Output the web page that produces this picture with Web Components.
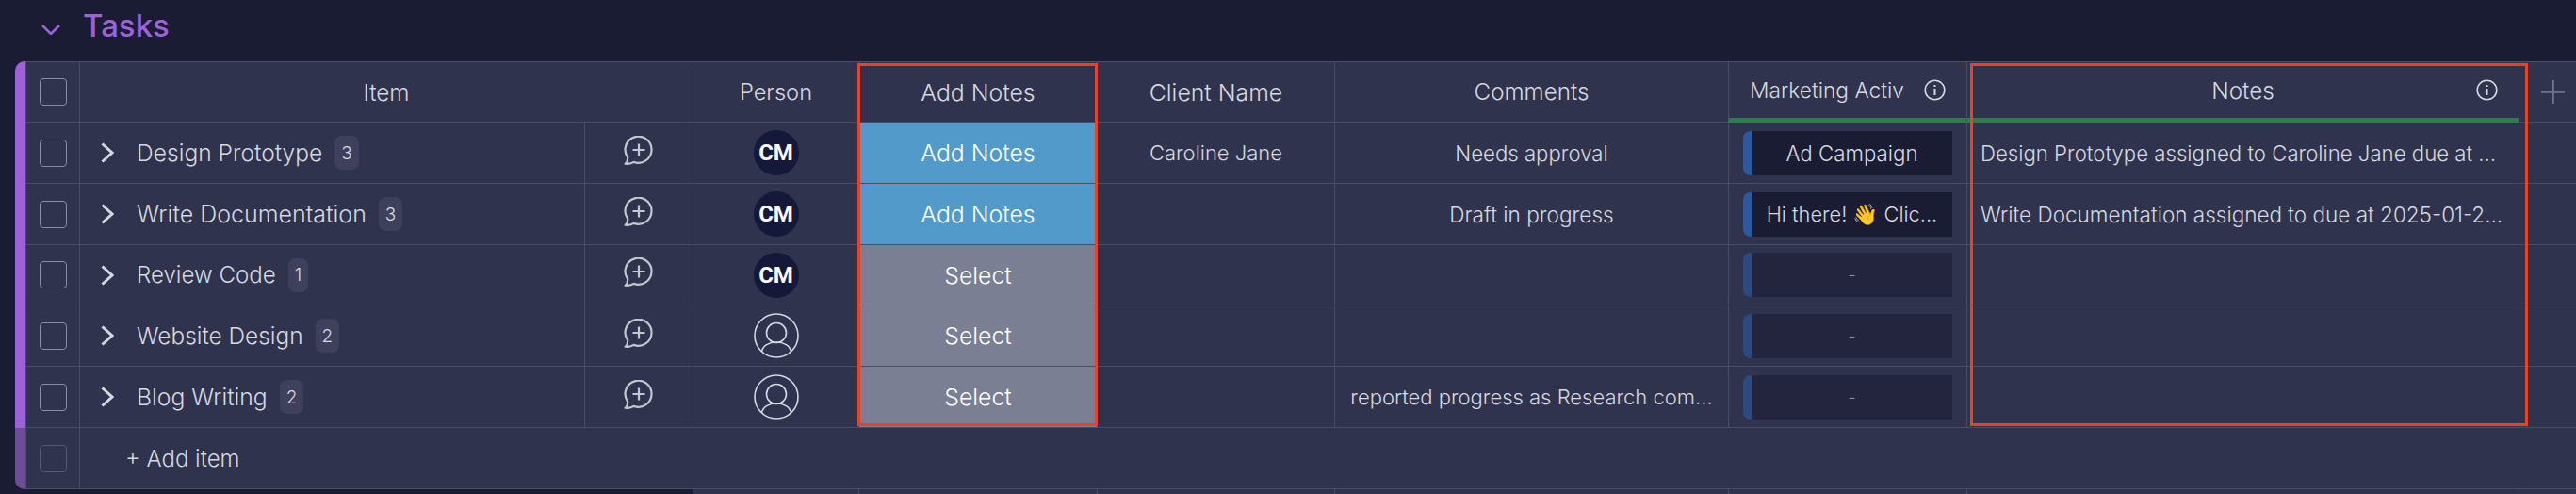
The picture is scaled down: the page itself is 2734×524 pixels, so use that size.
<!DOCTYPE html>
<html>
<head>
<meta charset="utf-8">
<title>Tasks</title>
<style>
html, body { margin: 0; background: #1a1c34; height: 524px; overflow: hidden; }
body { font-family: Inter, "Liberation Sans", sans-serif; color: #d5d8df; }
</style>
</head>
<body>
<task-board>
  <group-title slot="title">Tasks</group-title>

  <board-row>
    <board-cell kind="accent" class="top"></board-cell>
    <board-cell head><check-box></check-box></board-cell>
    <board-cell head style="grid-column: span 2; --fs: 24.300px">Item</board-cell>
    <board-cell head style="--fs: 23.700px">Person</board-cell>
    <board-cell head style="--fs: 24.800px">Add Notes</board-cell>
    <board-cell head style="--fs: 24.800px">Client Name</board-cell>
    <board-cell head style="--fs: 24.200px">Comments</board-cell>
    <board-cell head kind="green" style="--fs: 22.700px"><head-label>Marketing Activ</head-label></board-cell>
    <board-cell head kind="green" style="--fs: 24.300px"><head-label wide>Notes</head-label></board-cell>
    <board-cell head><add-column></add-column></board-cell>
  </board-row>

  <board-row>
    <board-cell kind="accent"></board-cell>
    <board-cell><check-box></check-box></board-cell>
    <board-cell kind="item" style="--item-fs: 24.600px"><item-name>Design Prototype<span slot="count">3</span></item-name></board-cell>
    <board-cell><update-icon></update-icon></board-cell>
    <board-cell><person-avatar>CM</person-avatar></board-cell>
    <board-cell kind="blue">Add Notes</board-cell>
    <board-cell>Caroline Jane</board-cell>
    <board-cell style="--fs: 22.200px">Needs approval</board-cell>
    <board-cell><status-tag>Ad Campaign</status-tag></board-cell>
    <board-cell kind="note" style="--fs: 22.200px">Design Prototype assigned to Caroline Jane due at ...</board-cell>
    <board-cell></board-cell>
  </board-row>

  <board-row>
    <board-cell kind="accent"></board-cell>
    <board-cell><check-box></check-box></board-cell>
    <board-cell kind="item" style="--item-fs: 25px"><item-name>Write Documentation<span slot="count">3</span></item-name></board-cell>
    <board-cell><update-icon></update-icon></board-cell>
    <board-cell><person-avatar>CM</person-avatar></board-cell>
    <board-cell kind="blue">Add Notes</board-cell>
    <board-cell></board-cell>
    <board-cell style="--fs: 22.600px">Draft in progress</board-cell>
    <board-cell><status-tag style="font-size: 21.800px">Hi there! 👋 Clic...</status-tag></board-cell>
    <board-cell kind="note" style="--fs: 22.500px">Write Documentation assigned to due at 2025-01-2...</board-cell>
    <board-cell></board-cell>
  </board-row>

  <board-row style="--row-h: 64px">
    <board-cell kind="accent"></board-cell>
    <board-cell class="open"><check-box></check-box></board-cell>
    <board-cell kind="item" class="open" style="--item-fs: 24.100px"><item-name>Review Code<span slot="count">1</span></item-name></board-cell>
    <board-cell class="open"><update-icon></update-icon></board-cell>
    <board-cell class="open"><person-avatar>CM</person-avatar></board-cell>
    <board-cell kind="gray">Select</board-cell>
    <board-cell></board-cell>
    <board-cell></board-cell>
    <board-cell><status-tag empty>-</status-tag></board-cell>
    <board-cell></board-cell>
    <board-cell></board-cell>
  </board-row>

  <board-row>
    <board-cell kind="accent"></board-cell>
    <board-cell><check-box></check-box></board-cell>
    <board-cell kind="item"><item-name>Website Design<span slot="count">2</span></item-name></board-cell>
    <board-cell><update-icon></update-icon></board-cell>
    <board-cell><person-avatar blank></person-avatar></board-cell>
    <board-cell kind="gray">Select</board-cell>
    <board-cell></board-cell>
    <board-cell></board-cell>
    <board-cell><status-tag empty>-</status-tag></board-cell>
    <board-cell></board-cell>
    <board-cell></board-cell>
  </board-row>

  <board-row>
    <board-cell kind="accent"></board-cell>
    <board-cell><check-box></check-box></board-cell>
    <board-cell kind="item" style="--item-fs: 24.700px"><item-name>Blog Writing<span slot="count">2</span></item-name></board-cell>
    <board-cell><update-icon></update-icon></board-cell>
    <board-cell><person-avatar blank></person-avatar></board-cell>
    <board-cell kind="gray">Select</board-cell>
    <board-cell></board-cell>
    <board-cell>reported progress as Research com...</board-cell>
    <board-cell><status-tag empty>-</status-tag></board-cell>
    <board-cell></board-cell>
    <board-cell></board-cell>
  </board-row>

  <board-row>
    <board-cell kind="accent" class="dim bottom"></board-cell>
    <board-cell><check-box dim></check-box></board-cell>
    <board-cell kind="add" style="grid-column: span 9">+ Add item</board-cell>
  </board-row>

  <board-row style="--row-h: 5px">
    <board-cell kind="gap" style="grid-column: span 4"></board-cell>
    <board-cell kind="sum"></board-cell>
    <board-cell kind="sum"></board-cell>
    <board-cell kind="sum"></board-cell>
    <board-cell kind="sum"></board-cell>
    <board-cell kind="sum"></board-cell>
    <board-cell kind="sum"></board-cell>
    <board-cell kind="sum"></board-cell>
  </board-row>

  <mark-box style="left: 910px; top: 67px; width: 255px; height: 385px" slot="marks"></mark-box>
  <mark-box style="left: 2091px; top: 67px; width: 592px; height: 385px" slot="marks"></mark-box>
</task-board>

<script>
function define(name, css, html) {
  customElements.define(name, class extends HTMLElement {
    constructor() {
      super();
      this.attachShadow({ mode: "open" }).innerHTML = `<style>${css}</style>${html}`;
    }
  });
}

define("task-board", `
:host {
  position: relative;
  display: block;
  --cols: 11px 57px 536px 115px 176px 253px 252px 418px 253px 586px 61px;
  --bg: #30334e;
  --line: #4b4d68;
}
.rows { display: block; padding-left: 16px; }
`, `<slot name="title"></slot><div class="rows"><slot></slot></div><slot name="marks"></slot>`);

define("group-title", `
:host {
  display: flex;
  align-items: center;
  gap: 24px;
  height: 65px;
  padding: 0 0 11px 44px;
  box-sizing: border-box;
  color: #9d62d8;
  font-size: 33px;
  font-weight: 500;
}
svg { width: 20px; height: 11px; margin-top: 8px; }
`, `<svg viewBox="0 0 20 11" fill="none" stroke="#9d62d8" stroke-width="2.6"><path d="M1 1l9 9 9-9"/></svg><slot></slot>`);

define("board-row", `
:host {
  display: grid;
  grid-template-columns: var(--cols);
  height: var(--row-h, 65px);
}
`, `<slot></slot>`);

define("board-cell", `
:host {
  display: flex;
  align-items: center;
  justify-content: center;
  box-sizing: border-box;
  min-width: 0;
  overflow: hidden;
  background: var(--bg);
  border-left: 1px solid var(--line);
  border-bottom: 1px solid var(--line);
  color: #d5d8df;
  font-size: var(--fs, 22px);
  font-weight: 350;
  white-space: nowrap;
}
:host([head]) { border-top: 1px solid var(--line); }
:host([kind="accent"]) { background: #9d62d8; border: 0; }
:host(.top) { border-top-left-radius: 10px; }
:host(.bottom) { border-bottom-left-radius: 10px; }
:host(.dim) { background: #6b4e96; }
:host(.open) { border-bottom-color: transparent; }
:host([kind="item"]) { justify-content: flex-start; padding-left: 22px; font-size: var(--item-fs, 24.400px); }
:host([kind="blue"]) { background: #529aca; color: #fff; font-size: 24.800px; }
:host([kind="gray"]) { background: #7b7f94; color: #fff; font-size: 24.800px; }
:host([kind="note"]) { justify-content: flex-start; padding-left: 14px; }
:host([kind="add"]) { justify-content: flex-start; padding-left: 48px; font-size: 24px; }
:host([kind="green"]) { border-bottom: 5px solid #2f7d4f; }
:host([kind="gap"]) { background: transparent; border: 0; }
:host([kind="sum"]) { border-bottom: 0; }
`, `<slot></slot>`);

define("check-box", `
:host {
  display: block;
  width: 29px;
  height: 29px;
  box-sizing: border-box;
  border: 1.5px solid #8a8ca0;
  border-radius: 4px;
}
:host([dim]) { border-color: #565872; }
`, ``);

define("item-name", `
:host { display: flex; align-items: center; }
svg { width: 14px; height: 22px; margin-right: 24px; }
.count {
  display: flex;
  align-items: center;
  justify-content: center;
  height: 36px;
  margin-left: 13px;
  padding: 0 7px;
  border-radius: 8px;
  background: #3f415c;
  font-size: 19px;
}
`, `<svg viewBox="0 0 14 22" fill="none" stroke="#d5d8df" stroke-width="3"><path d="M1.5 1.5l10.500 9.500-10.500 9.500"/></svg><span><slot></slot></span><div class="count"><slot name="count"></slot></div>`);

define("update-icon", `
:host { display: block; width: 32px; height: 32px; margin-top: -5px; }
svg { display: block; }
`, `<svg width="32" height="32" viewBox="0 0 32 32" fill="none" stroke="#c5c7d0" stroke-width="2.2"><path d="M10.600 27.900C8 29.600 4.800 30.200 2 29.600c1.500-1.600 2.400-3.600 2.200-6.600A14 14 0 1 1 10.600 27.900z"/><path d="M16 8.500v13M9.500 15h13"/></svg>`);

define("person-avatar", `
:host { display: block; width: 48px; height: 48px; }
.cm {
  display: flex;
  align-items: center;
  justify-content: center;
  width: 48px;
  height: 48px;
  border-radius: 50%;
  background: #14193a;
  color: #fff;
  font-family: Roboto, sans-serif;
  font-size: 24px;
  font-weight: 700;
}
svg { display: none; }
:host([blank]) .cm { display: none; }
:host([blank]) svg { display: block; }
`, `<div class="cm"><slot></slot></div><svg width="48" height="48" viewBox="0 0 48 48" fill="none" stroke="#d5d8df" stroke-width="1.6"><circle cx="24" cy="24" r="23"/><circle cx="24" cy="21" r="10.500"/><path d="M8.500 41C9.500 34.500 16 31 24 31s14.500 3.500 15.500 10"/></svg>`);

define("status-tag", `
:host {
  display: flex;
  align-items: center;
  justify-content: center;
  box-sizing: border-box;
  width: 222px;
  height: 47px;
  border-left: 9px solid #2c5aa0;
  border-radius: 8px 0 0 8px;
  background: #1a1c34;
  font-size: 22.300px;
}
:host([empty]) { background: #23253f; border-left-color: #2b4a80; color: #8a8ca0; font-size: 18px; }
`, `<slot></slot>`);

define("head-label", `
:host { display: flex; align-items: center; justify-content: center; gap: 21px; width: 100%; position: relative; }
svg { flex: none; }
:host([wide]) svg { position: absolute; right: 22px; }
`, `<slot></slot><svg width="23" height="23" viewBox="0 0 23 23" fill="none" stroke="#d5d8df" stroke-width="1.6"><circle cx="11.500" cy="11.500" r="10.300"/><path d="M11.500 10v7" stroke-width="2"/><path d="M11.500 6v2" stroke-width="2"/></svg>`);

define("add-column", `
:host { display: block; width: 25px; height: 25px; margin-left: 10px; }
svg { display: block; }
`, `<svg width="25" height="25" viewBox="0 0 25 25" stroke="#70728a" stroke-width="2.600"><path d="M12.500 0v25M0 12.500h25"/></svg>`);

define("mark-box", `
:host {
  position: absolute;
  box-sizing: border-box;
  border: 3px solid #e8432a;
  pointer-events: none;
}
`, ``);
</script>
</body>
</html>
